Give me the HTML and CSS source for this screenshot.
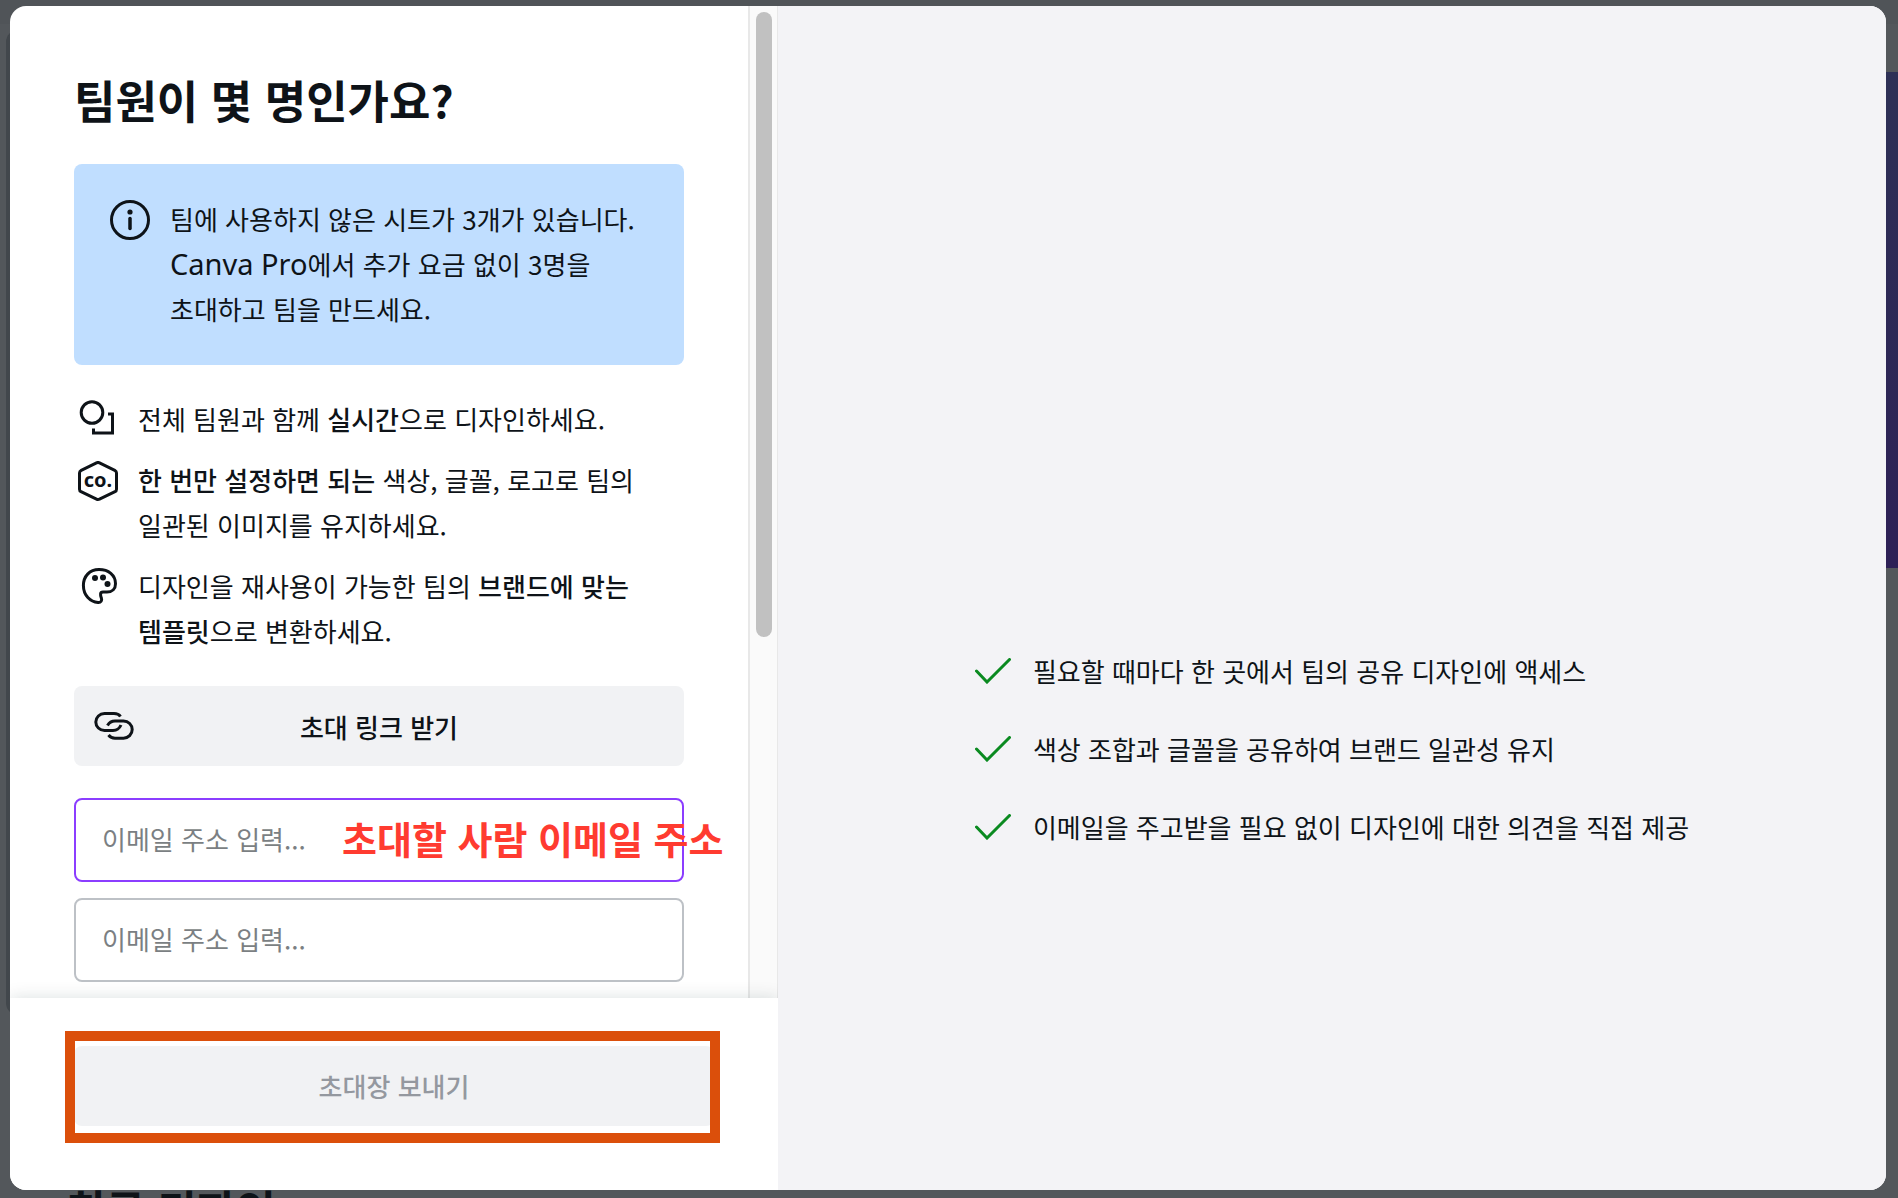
FILE: index.html
```
<!DOCTYPE html>
<html lang="ko">

<head>
	<meta charset="UTF-8">
	<meta name="viewport" content="width=device-width, initial-scale=1.0">
	<title>팀원 초대</title>
	<link rel="stylesheet" href="styles.css">
</head>

<body>
	<!-- dimmed page behind the dialog -->
	<div class="page">
		<div class="page-header"></div>
		<div class="page-body">
			<div class="page-side"></div>
			<div class="page-hero"></div>
		</div>
		<h2 class="page-title">최근 디자인</h2>
	</div>

	<main class="modal" role="dialog" aria-labelledby="modalTitle">
		<section class="invite">
			<div class="invite-body">
				<div class="invite-content">
					<h1 class="invite-title" id="modalTitle">팀원이 몇 명인가요?</h1>

					<div class="notice">
						<svg class="icon" viewBox="0 0 40 40" fill="none" stroke="currentColor" stroke-width="3">
							<circle cx="20" cy="20" r="18.5" />
							<path d="M20 18.5v10" stroke-linecap="round" stroke-width="3.5" />
							<circle cx="20" cy="12" r="2.6" fill="currentColor" stroke="none" />
						</svg>
						<p>팀에 사용하지 않은 시트가 3개가 있습니다. <span class="latin">Canva Pro</span>에서 추가 요금 없이 3명을 초대하고 팀을 만드세요.</p>
					</div>

					<ul class="features">
						<li>
							<svg class="icon" viewBox="0 2 40 40" fill="none" stroke="currentColor" stroke-width="3">
								<circle cx="14" cy="14.5" r="10.8" />
								<path d="M30 16h4.5v19H15.5v-4.5" />
							</svg>
							<p>전체 팀원과 함께 <strong>실시간</strong>으로 디자인하세요.</p>
						</li>
						<li>
							<svg class="icon" viewBox="0 0 40 40" fill="none" stroke="currentColor" stroke-width="3" stroke-linejoin="round">
								<path d="M18.5 1.8 3.2 9.3Q1.5 10.2 1.5 12v16.2q0 1.7 1.5 2.5l15.5 7.4q1.5.7 3 0L37 30.7q1.5-.8 1.5-2.5V12q0-1.8-1.7-2.7L21.5 1.8q-1.5-.7-3 0z" />
								<text class="icon-text" x="20" y="26" text-anchor="middle">co.</text>
							</svg>
							<p><strong>한 번만 설정하면 되는</strong> 색상, 글꼴, 로고로 팀의 일관된 이미지를 유지하세요.</p>
						</li>
						<li>
							<svg class="icon" viewBox="0 2 40 40" fill="none" stroke="currentColor" stroke-width="3" stroke-linejoin="round">
								<path d="M21 4.5C11.5 4.5 5.4 11.5 5.4 20.5c0 10 7 16.300 14.6 17 3 .2 4.300-2 3.300-4.600-.9-2.600-1.600-5.900 1.700-5.900h4c5.500 0 8.500-3.200 8.500-8.300C37.5 10 30.5 4.5 21 4.5z" />
								<g fill="currentColor" stroke="none">
									<circle cx="17" cy="13" r="3" />
									<circle cx="25" cy="12.5" r="3" />
									<circle cx="29.5" cy="19" r="3" />
								</g>
							</svg>
							<p>디자인을 재사용이 가능한 팀의 <strong>브랜드에 맞는 템플릿</strong>으로 변환하세요.</p>
						</li>
					</ul>

					<button type="button" class="btn link-btn">
						<svg class="icon" viewBox="0 0 40 40" fill="none" stroke="currentColor" stroke-width="3">
							<path d="M26.5 10.5Q24.5 7.5 20 7.5h-9.5a8.7 8.5 0 0 0 0 17H19Q24.5 24.5 27 19" />
							<path d="M13.5 19.5Q16 15 21 15h8.5a8.7 8.6 0 0 1 0 17.2H21Q17 32.2 14.5 29" />
						</svg>
						초대 링크 받기
					</button>

					<form class="emails">
						<div class="field">
							<input type="email" class="email-input active" aria-label="이메일 주소 1" placeholder="이메일 주소 입력...">
							<span class="callout">초대할 사람 이메일 주소</span>
						</div>
						<div class="field">
							<input type="email" class="email-input" aria-label="이메일 주소 2" placeholder="이메일 주소 입력...">
						</div>
					</form>
				</div>
				<div class="scrollbar">
					<div class="scrollbar-thumb"></div>
				</div>
			</div>

			<footer class="invite-footer">
				<div class="highlight">
					<button type="button" class="btn send-btn" disabled>초대장 보내기</button>
				</div>
			</footer>
		</section>

		<section class="benefits">
			<ul class="benefit-list">
				<li>
					<svg class="check" viewBox="0 0 36 26"><path d="M1.5 13 12 24 34.5 1.5" /></svg>
					필요할 때마다 한 곳에서 팀의 공유 디자인에 액세스
				</li>
				<li>
					<svg class="check" viewBox="0 0 36 26"><path d="M1.5 13 12 24 34.5 1.5" /></svg>
					색상 조합과 글꼴을 공유하여 브랜드 일관성 유지
				</li>
				<li>
					<svg class="check" viewBox="0 0 36 26"><path d="M1.5 13 12 24 34.5 1.5" /></svg>
					이메일을 주고받을 필요 없이 디자인에 대한 의견을 직접 제공
				</li>
			</ul>
		</section>
	</main>
</body>

</html>
```

FILE: styles.css
```
* {
	box-sizing: border-box;
}

body {
	margin: 0;
	height: 100vh;
	display: flex;
	padding: 6px 12px 8px 10px;
	overflow: hidden;
	background-color: #53575b;
	color: #0e1318;
	font-family: 'Noto Sans CJK KR', 'Noto Sans', sans-serif;
	font-size: 26px;
	line-height: 45px;
	word-break: keep-all;
}

h1,
h2,
p,
ul {
	margin: 0;
	padding: 0;
}

ul {
	list-style: none;
	display: flex;
	flex-direction: column;
}

strong {
	font-weight: 500;
}

/* page behind the dialog */
.page {
	position: absolute;
	inset: 0;
	display: flex;
	flex-direction: column;
	overflow: hidden;
}

.page-header {
	flex: none;
	height: 24px;
	background-color: #505458;
}

.page-body {
	flex: none;
	display: flex;
	justify-content: space-between;
	height: 1156px;
}

.page-side {
	width: 300px;
	height: 985px;
	margin: 6px 0 0 6px;
	border-radius: 12px;
	background-color: #42474c;
}

.page-hero {
	width: 300px;
	height: 496px;
	margin-top: 48px;
	background: linear-gradient(#2e3156, #2d2056);
}

.page-title {
	margin-left: 66px;
	font-size: 43px;
	line-height: 56px;
}

/* dialog */
.modal {
	position: relative;
	flex: 1;
	display: flex;
	border-radius: 16px;
	overflow: hidden;
	background-color: #fff;
}

.invite {
	flex: 0 0 768px;
	display: flex;
	flex-direction: column;
}

.invite-body {
	flex: 1;
	min-height: 0;
	display: flex;
	overflow: hidden;
}

.invite-content {
	flex: 1;
	padding: 66px 64px 0;
}

.invite-title {
	margin-bottom: 36px;
	font-size: 45px;
	line-height: 56px;
	font-weight: 700;
}

.icon {
	flex: none;
	width: 40px;
	height: 40px;
}

.notice .icon,
.features .icon {
	margin-top: 4px;
}

.notice {
	display: flex;
	gap: 20px;
	padding: 32px 36px 34px;
	border-radius: 8px;
	background-color: #c0deff;
}

.latin {
	font-family: 'Noto Sans', sans-serif;
	font-size: 29px;
	line-height: 1;
}

.features {
	gap: 16px;
	margin: 31px 0 33px 4px;
}

.features li {
	display: flex;
	gap: 20px;
}

.icon-text {
	font-family: 'Noto Sans', sans-serif;
	font-size: 20px;
	font-weight: 700;
	fill: currentColor;
	stroke: none;
}

.btn {
	display: block;
	width: 100%;
	height: 80px;
	padding: 0 0 2px;
	border: none;
	border-radius: 8px;
	background-color: #f1f2f4;
	color: #0e1318;
	font: inherit;
	font-weight: 500;
}

.link-btn {
	display: grid;
	grid-template-columns: 40px 1fr 40px;
	align-items: center;
	padding: 0 20px;
}

.emails {
	display: flex;
	flex-direction: column;
	gap: 16px;
	margin-top: 32px;
}

.field {
	position: relative;
}

.email-input {
	display: block;
	width: 100%;
	height: 84px;
	padding: 0 26px 4px;
	border: 2px solid #bdc1c6;
	border-radius: 8px;
	background-color: #fff;
	color: #0e1318;
	font: inherit;
}

.email-input::placeholder {
	color: #7b7f83;
}

.email-input.active {
	border-color: #8b3dff;
}

.callout {
	position: absolute;
	top: 17px;
	left: 268px;
	color: #ff3b30;
	font-size: 38px;
	font-weight: 700;
	white-space: nowrap;
}

.scrollbar {
	width: 30px;
	padding: 6px 6px 0;
	border: 1px solid #e8e8e8;
	border-width: 0 1px 0 2px;
	background-color: #fafafa;
}

.scrollbar-thumb {
	width: 16px;
	height: 63.4%;
	border-radius: 8px;
	background-color: #c1c1c1;
}

.invite-footer {
	position: relative;
	padding: 48px 64px 64px;
	background-color: #fff;
	box-shadow: 0 0 16px rgba(14, 49, 44, 0.15);
}

.highlight {
	position: relative;
}

.highlight::after {
	content: '';
	position: absolute;
	inset: -15px -6px -17px -9px;
	border: 10px solid #db4f0b;
}

.send-btn {
	color: #94989f;
}

.benefits {
	position: relative;
	flex: 1;
	display: flex;
	align-items: center;
	justify-content: center;
	padding-top: 301px;
	background-color: #f3f3f6;
}

.benefit-list {
	gap: 33px;
}

.benefit-list li {
	display: flex;
	align-items: center;
	gap: 22px;
}

.check {
	flex: none;
	width: 36px;
	height: 26px;
	fill: none;
	stroke: #0a8a20;
	stroke-width: 3;
	stroke-linecap: round;
}
```
